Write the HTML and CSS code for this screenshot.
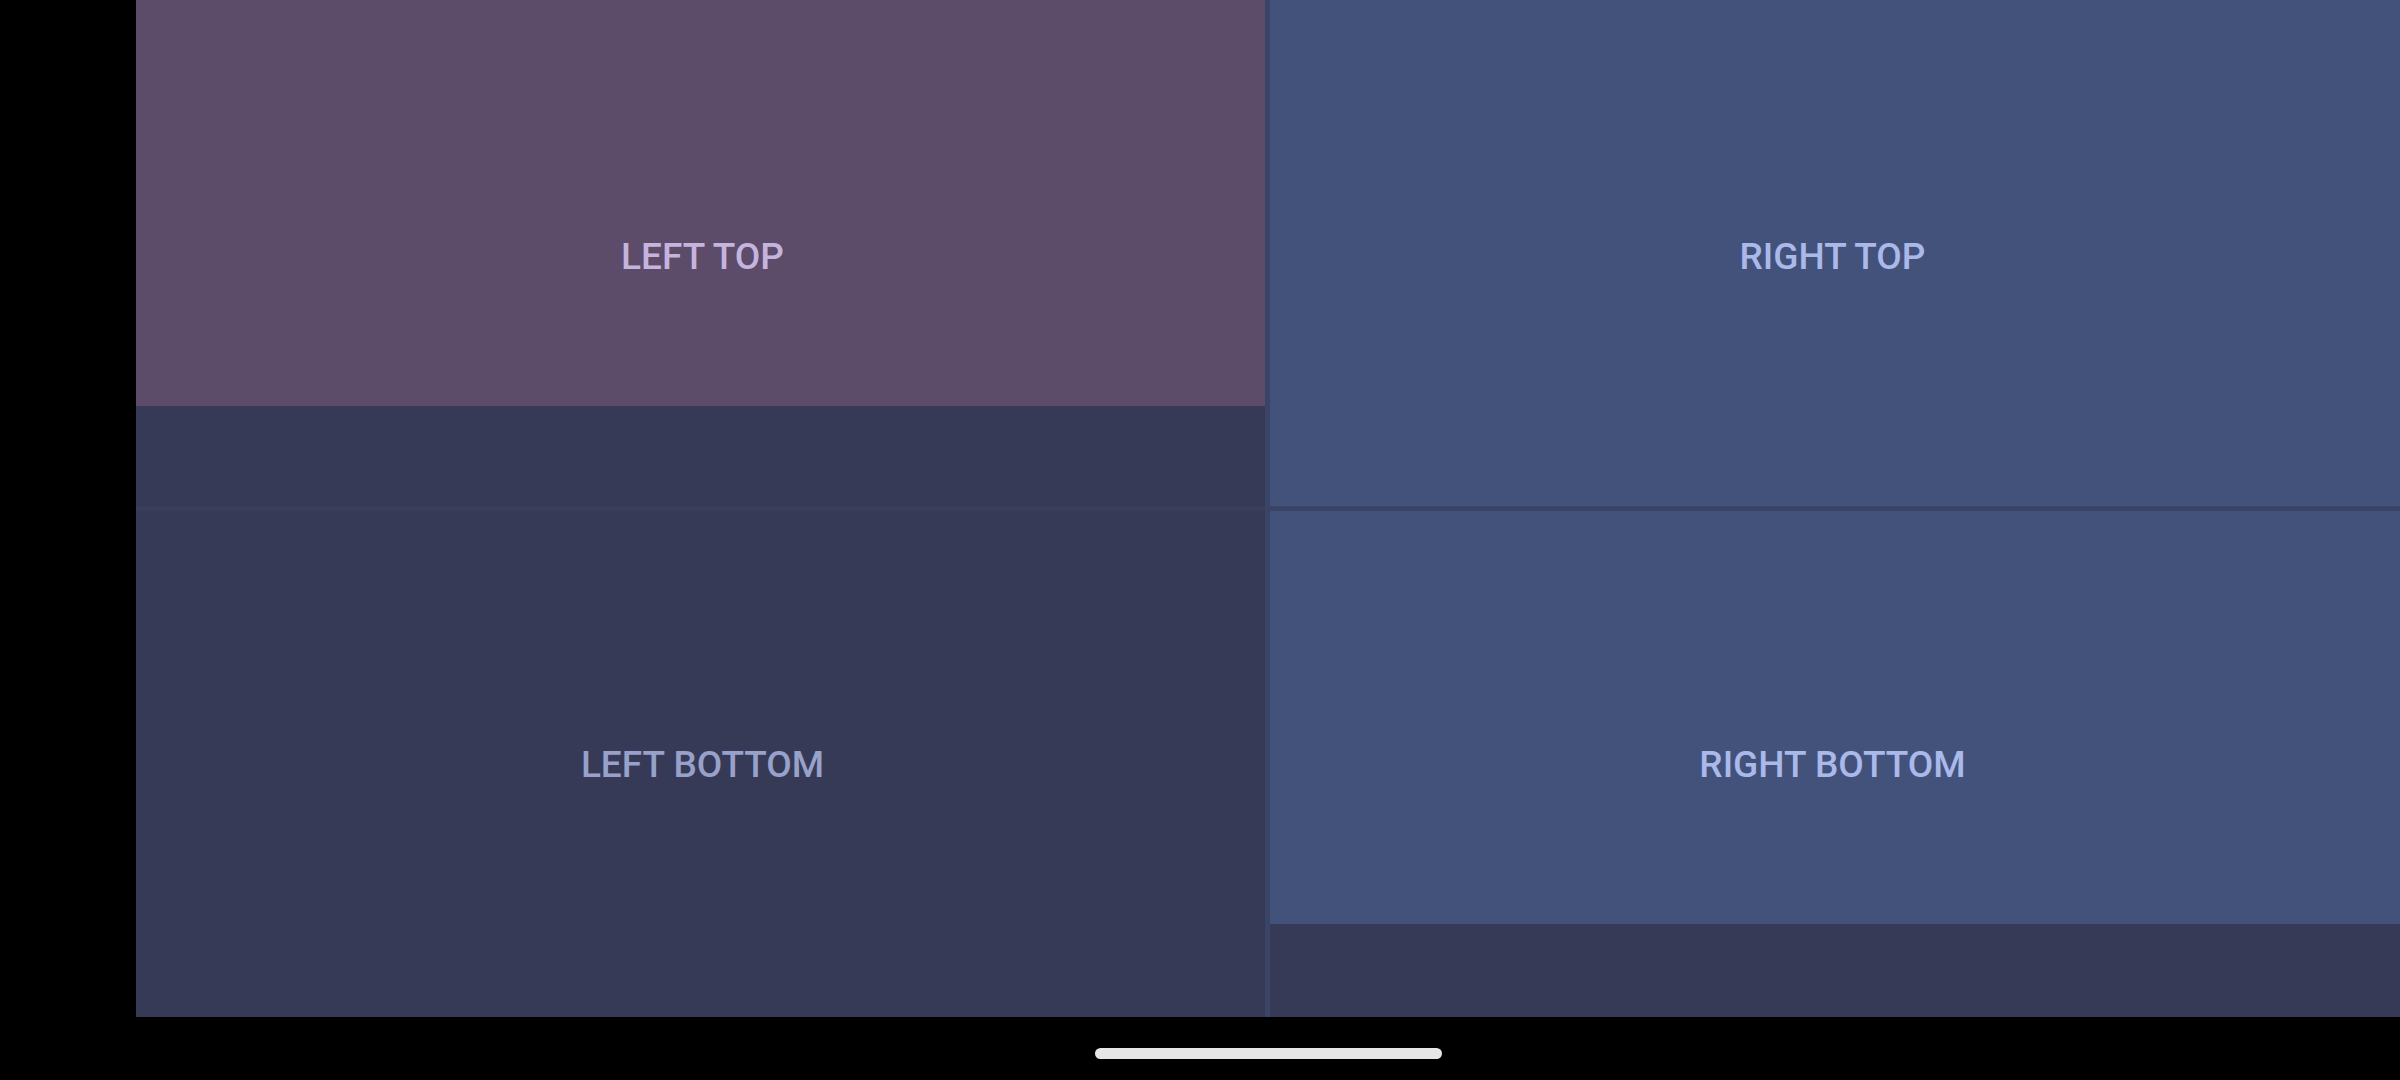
FILE: index.html
```html
<!DOCTYPE html>
<html lang="en">
<head>
    <meta charset="UTF-8">
    <meta name="viewport" content="width=device-width, initial-scale=1.0">
    <title>Split panes</title>
    <link rel="stylesheet" href="styles.css">
</head>
<body>
    <div class="screen">
        <div class="panes">
            <div class="column column-left">
                <div class="cell cell-top">
                    <div class="fill fill-purple"></div>
                    <span class="label label-lilac">LEFT TOP</span>
                </div>
                <div class="hdivider hdivider-left"></div>
                <div class="cell">
                    <span class="label label-grey">LEFT BOTTOM</span>
                </div>
            </div>
            <div class="vdivider"></div>
            <div class="column column-right">
                <div class="cell cell-top cell-blue">
                    <span class="label label-blue">RIGHT TOP</span>
                </div>
                <div class="hdivider"></div>
                <div class="cell">
                    <div class="fill fill-blue"></div>
                    <span class="label label-blue">RIGHT BOTTOM</span>
                </div>
            </div>
        </div>
        <div class="navbar">
            <div class="handle"></div>
        </div>
    </div>
</body>
</html>
```

FILE: styles.css
```css
html, body { margin: 0; padding: 0; background: #000; }
body { font-family: Roboto, "Noto Sans", sans-serif; }

.screen {
    width: 2400px;
    height: 1080px;
    display: flex;
    flex-direction: column;
    padding-left: 136px;
    box-sizing: border-box;
}

.panes {
    height: 1017px;
    display: flex;
}

.column {
    flex: 1;
    display: flex;
    flex-direction: column;
}

.column-left { flex: 0 0 1129px; }

.cell {
    flex: 1;
    position: relative;
    display: flex;
    align-items: center;
    justify-content: center;
    background: #363a57;
}

.cell-top {
    flex: 0 0 506px;
    box-sizing: border-box;
    padding-top: 6px;
}

.cell-blue { background: #43527b; }

.fill {
    position: absolute;
    left: 0;
    right: 0;
    top: 0;
}

.fill-purple { height: 406px; background: #5c4b69; }
.fill-blue { height: 413px; background: #43527b; }

.label {
    position: relative;
    font-size: 37px;
    font-weight: 500;
}

.column-left .label { margin-left: 4px; }
.column-right .label { margin-right: 5px; }

.label-lilac { color: #c5b4de; }
.label-grey { color: #98a1c9; }
.label-blue { color: #aab9ea; }

.hdivider {
    height: 5px;
    background: #3b4466;
}

.hdivider-left { background: #383e5c; }

.vdivider {
    width: 5px;
    background: #3a4466;
}

.navbar {
    flex: 1;
    display: flex;
    justify-content: center;
    align-items: flex-start;
    padding-top: 31px;
}

.handle {
    width: 347px;
    height: 11px;
    border-radius: 6px;
    background: #e6e6e6;
}
```
